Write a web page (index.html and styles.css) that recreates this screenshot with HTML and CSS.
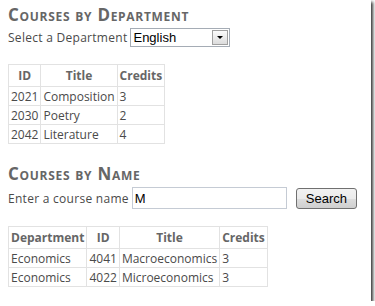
FILE: index.html
```html
<!DOCTYPE html>
<html lang="en">
<head>
  <meta charset="UTF-8">
  <title>Courses</title>
  <link rel="stylesheet" href="styles.css">
</head>
<body>
  <div class="page">
    <h2>Courses by Department</h2>
    <div class="field-row">
      <label for="deptSelect">Select a Department</label>
      <div class="dropdown">
        <select id="deptSelect">
          <option>English</option>
          <option>Economics</option>
          <option>Mathematics</option>
        </select>
        <span class="dropdown-btn"><span class="arrow"></span></span>
      </div>
    </div>

    <table class="grid grid-dept">
      <tr><th>ID</th><th>Title</th><th>Credits</th></tr>
      <tr><td>2021</td><td>Composition</td><td>3</td></tr>
      <tr><td>2030</td><td>Poetry</td><td>2</td></tr>
      <tr><td>2042</td><td>Literature</td><td>4</td></tr>
    </table>

    <h2 class="second">Courses by Name</h2>
    <div class="field-row search-row">
      <label for="nameInput">Enter a course name</label>
      <input type="text" id="nameInput" value="M">
      <button class="search-btn">Search</button>
    </div>

    <table class="grid grid-name">
      <tr><th>Department</th><th>ID</th><th>Title</th><th>Credits</th></tr>
      <tr><td>Economics</td><td>4041</td><td>Macroeconomics</td><td>3</td></tr>
      <tr><td>Economics</td><td>4022</td><td>Microeconomics</td><td>3</td></tr>
    </table>
  </div>
</body>
</html>
```

FILE: styles.css
```css
* {
  box-sizing: border-box;
}

body {
  margin: 0;
  background: #ffffff;
  font-family: 'Open Sans', 'DejaVu Sans', sans-serif;
  font-size: 12px;
  color: #4a4a4a;
}

.page {
  width: 371px;
  height: 301px;
  background: #ffffff;
  padding: 4px 8px 0;
  box-shadow: 2px 2px 3px rgba(0, 0, 0, 0.8);
}

h2 {
  margin: 0;
  font-size: 17px;
  line-height: 22px;
  font-weight: bold;
  font-variant: small-caps;
  color: #666666;
  letter-spacing: 0.7px;
}

h2.second {
  margin-top: 19px;
}

.field-row {
  display: flex;
  align-items: center;
  height: 22px;
  gap: 3px;
}

.field-row label {
  letter-spacing: 0.28px;
}

.search-row {
  height: 24px;
  margin-top: 1px;
}

.dropdown {
  display: flex;
  width: 100px;
  height: 19px;
  border: 1px solid #a5acb5;
  background: #fff;
}

.dropdown select {
  flex: 1;
  min-width: 0;
  border: none;
  outline: none;
  appearance: none;
  -webkit-appearance: none;
  background: transparent;
  font-family: 'Liberation Sans', Arial, sans-serif;
  font-size: 13px;
  color: #000;
  padding: 0 2px;
}

.dropdown-btn {
  width: 16px;
  margin: 1px;
  border: 1px solid #a0a0a0;
  background: linear-gradient(#fbfbfb, #dcdcdc);
  display: flex;
  align-items: center;
  justify-content: center;
}

.arrow {
  width: 0;
  height: 0;
  border-left: 3px solid transparent;
  border-right: 3px solid transparent;
  border-top: 3px solid #000;
}

input[type="text"] {
  width: 155px;
  height: 22px;
  border: 1px solid #c5cbd4;
  padding: 0 2px;
  font-family: 'Liberation Sans', Arial, sans-serif;
  font-size: 13px;
  color: #000;
  outline: none;
}

.search-btn {
  margin-left: 6px;
  width: 61px;
  height: 21px;
  border: 1px solid #707070;
  border-radius: 3px;
  background: linear-gradient(#f2f2f2 0%, #ebebeb 50%, #dddddd 51%, #cfcfcf 100%);
  font-family: 'Liberation Sans', Arial, sans-serif;
  font-size: 13px;
  color: #000;
  padding: 0;
}

.grid {
  border-collapse: collapse;
  border-top: 1px solid #d8d8d8;
  border-left: 1px solid #d8d8d8;
  border-right: 1px solid #a0a0a0;
  border-bottom: 1px solid #a0a0a0;
}

.grid th,
.grid td {
  border: 1px solid #e2e2e2;
  padding: 0 2px;
  height: 19px;
  line-height: 17px;
  white-space: nowrap;
}

.grid th {
  font-weight: bold;
  color: #666666;
  text-align: center;
  height: 22px;
}

.grid td {
  text-align: left;
}

.grid-dept {
  margin-top: 16px;
}

.grid-name {
  margin-top: 16px;
}
```
